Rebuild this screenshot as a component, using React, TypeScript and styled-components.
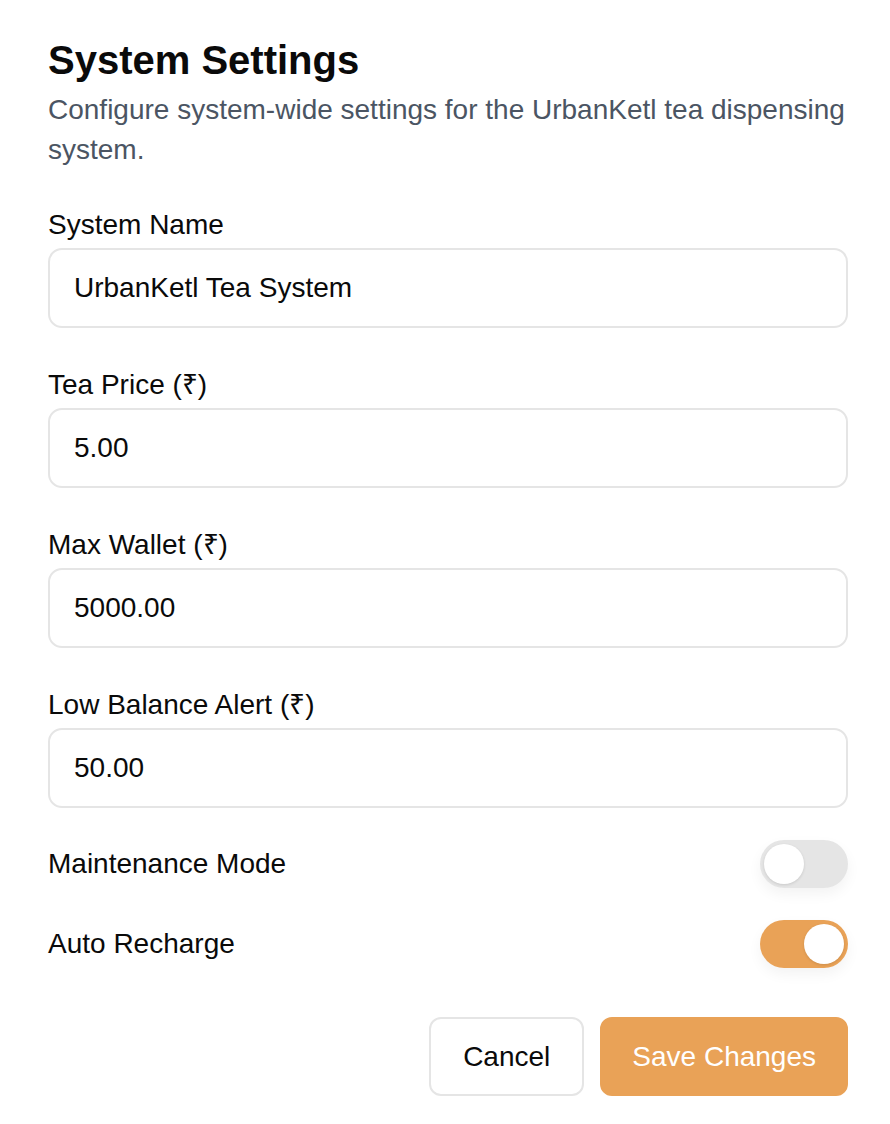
import React, { useState } from "react";
import styled, { createGlobalStyle } from "styled-components";

const Global = createGlobalStyle`
  html, body { margin: 0; padding: 0; background: #ffffff; }
  body { font-family: "Liberation Sans", Arial, Helvetica, sans-serif; color: #0a0a0a; }
  * { box-sizing: border-box; }
`;

const Page = styled.div`
  width: 890px;
  padding: 32px 42px 32px 48px;
  display: flex;
  flex-direction: column;
`;

const Title = styled.h1`
  margin: 0;
  font-size: 40px;
  line-height: 56px;
  font-weight: 700;
  color: #0a0a0a;
`;

const Subtitle = styled.p`
  margin: 2px 0 0;
  font-size: 28px;
  line-height: 40px;
  color: #4b5563;
`;

const Form = styled.div`
  margin-top: 35px;
  display: flex;
  flex-direction: column;
  gap: 37px;
`;

const Field = styled.label`
  display: flex;
  flex-direction: column;
  gap: 3px;
`;

const Label = styled.span`
  font-size: 28px;
  line-height: 40px;
  color: #0a0a0a;
`;

const Input = styled.input`
  height: 80px;
  width: 100%;
  border: 2px solid #e5e5e5;
  border-radius: 14px;
  padding: 0 24px;
  font-family: inherit;
  font-size: 28px;
  color: #0a0a0a;
  background: #fff;
  outline: none;
`;

const Toggles = styled.div`
  margin-top: -5px;
  display: flex;
  flex-direction: column;
  gap: 32px;
`;

const ToggleRow = styled.div`
  display: flex;
  align-items: center;
  justify-content: space-between;
  height: 48px;
`;

const Track = styled.button<{ $on: boolean }>`
  position: relative;
  width: 88px;
  height: 48px;
  border: none;
  padding: 0;
  border-radius: 24px;
  cursor: pointer;
  background: ${(p) => (p.$on ? "#e9a257" : "#e5e5e5")};
  box-shadow: 0 6px 14px rgba(0, 0, 0, 0.05);
`;

const Knob = styled.span<{ $on: boolean }>`
  position: absolute;
  top: 4px;
  left: ${(p) => (p.$on ? "44px" : "4px")};
  width: 40px;
  height: 40px;
  border-radius: 50%;
  background: #ffffff;
  box-shadow: 0 1px 3px rgba(0, 0, 0, 0.12);
`;

const Actions = styled.div`
  margin-top: 49px;
  display: flex;
  justify-content: flex-end;
  gap: 16px;
`;

const Button = styled.button<{ $primary?: boolean }>`
  height: 79px;
  padding: 0 ${(p) => (p.$primary ? "30px" : "32px")};
  border-radius: 12px;
  font-family: inherit;
  font-size: 28px;
  cursor: pointer;
  border: 2px solid ${(p) => (p.$primary ? "#e9a257" : "#e5e5e5")};
  background: ${(p) => (p.$primary ? "#e9a257" : "#ffffff")};
  color: ${(p) => (p.$primary ? "#ffffff" : "#0a0a0a")};
`;

const fields = [
  { label: "System Name", value: "UrbanKetl Tea System" },
  { label: "Tea Price (₹)", value: "5.00" },
  { label: "Max Wallet (₹)", value: "5000.00" },
  { label: "Low Balance Alert (₹)", value: "50.00" },
];

export default function App() {
  const [maint, setMaint] = useState(false);
  const [auto, setAuto] = useState(true);
  return (
    <>
      <Global />
      <Page>
        <Title>System Settings</Title>
        <Subtitle>Configure system-wide settings for the UrbanKetl tea dispensing system.</Subtitle>
        <Form>
          {fields.map((f) => (
            <Field key={f.label}>
              <Label>{f.label}</Label>
              <Input defaultValue={f.value} />
            </Field>
          ))}
          <Toggles>
            <ToggleRow>
              <Label>Maintenance Mode</Label>
              <Track $on={maint} onClick={() => setMaint(!maint)} aria-label="Maintenance Mode">
                <Knob $on={maint} />
              </Track>
            </ToggleRow>
            <ToggleRow>
              <Label>Auto Recharge</Label>
              <Track $on={auto} onClick={() => setAuto(!auto)} aria-label="Auto Recharge">
                <Knob $on={auto} />
              </Track>
            </ToggleRow>
          </Toggles>
        </Form>
        <Actions>
          <Button>Cancel</Button>
          <Button $primary>Save Changes</Button>
        </Actions>
      </Page>
    </>
  );
}
